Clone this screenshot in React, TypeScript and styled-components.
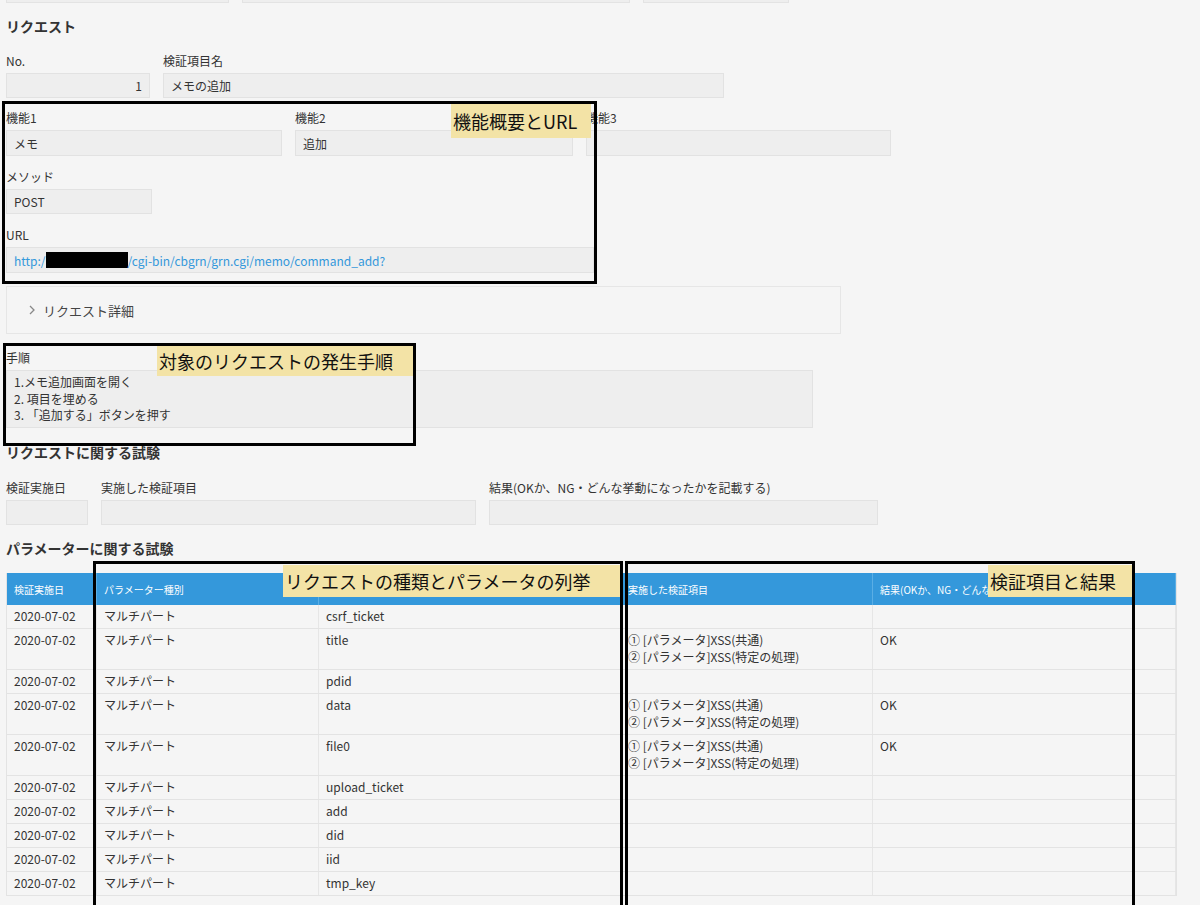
import React from "react";
import styled, { createGlobalStyle } from "styled-components";

const G = createGlobalStyle`
  body { margin:0; background:#f5f5f5; font-family:"Noto Sans CJK JP","Noto Sans",sans-serif; color:#333; font-size:12px; }
`;
const Page = styled.div`position:relative; width:1200px; height:905px; overflow:hidden; padding:0 6px; box-sizing:border-box;`;
const TopRow = styled.div`display:flex; gap:13px; height:3px; margin-bottom:13px;`;
const TopBox = styled.div<{ w: number }>`width:${p => p.w}px; border:1px solid #e3e3e3; border-top:none; background:#eee;`;
const H = styled.div<{ mt?: number }>`font-weight:bold; font-size:14px; color:#333; margin-top:${p => p.mt ?? 0}px; height:20px; line-height:20px;`;
const Row = styled.div<{ mt?: number }>`display:flex; gap:13px; margin-top:${p => p.mt ?? 0}px;`;
const Field = styled.div`display:flex; flex-direction:column;`;
const Label = styled.div`font-size:12px; height:16px; line-height:16px; margin-bottom:4px; color:#333;`;
const Input = styled.div<{ w: number; right?: boolean; link?: boolean; h?: number }>`
  width:${p => p.w}px; height:${p => p.h ?? 25}px; box-sizing:border-box; background:#eee; border:1px solid #e2e2e2;
  padding:0 7px; display:flex; align-items:center; justify-content:${p => (p.right ? "flex-end" : "flex-start")};
  color:${p => (p.link ? "#3498db" : "#333")}; font-size:12px; white-space:nowrap; overflow:hidden;
`;
const Redact = styled.span`display:inline-block; width:82px; height:16px; background:#000;`;
const Collapse = styled.div`width:835px; height:48px; box-sizing:border-box; border:1px solid #e6e6e6; margin-top:13px; display:flex; align-items:center; padding-left:20px; gap:6px; font-size:13px; color:#444;`;
const Area = styled.div`width:807px; height:58px; box-sizing:border-box; background:#eee; border:1px solid #e2e2e2; padding:3px 7px; line-height:16.5px; font-size:12px;`;
const Table = styled.div`width:1169px; margin-top:15px; border-left:1px solid #e3e3e3; border-right:1px solid #e3e3e3;`;
const cols = "90px 222px 302px 252px 303px";
const THead = styled.div`display:grid; grid-template-columns:${cols}; background:#3498db; color:#fff; height:32px; font-size:10px;`;
const Th = styled.div`display:flex; align-items:center; padding-left:7px; border-right:1px solid #5aaee5; white-space:nowrap; overflow:hidden;`;
const Tr = styled.div<{ h: number }>`display:grid; box-sizing:border-box; grid-template-columns:${cols}; height:${p => p.h}px; border-bottom:1px solid #e3e3e3; font-size:12px;`;
const Td = styled.div`padding:3px 7px 0; line-height:16.5px; border-right:1px solid #e6e6e6; white-space:nowrap;`;
const Note = styled.div<{ x: number; y: number; w: number; h: number }>`
  position:absolute; left:${p => p.x}px; top:${p => p.y}px; width:${p => p.w}px; height:${p => p.h}px; border:3px solid #000; box-sizing:border-box;`;
const Tag = styled.div<{ x: number; y: number; w: number; h: number }>`
  position:absolute; left:${p => p.x}px; top:${p => p.y}px; width:${p => p.w}px; height:${p => p.h}px; background:#f3e3a6;
  font-size:18px; line-height:${p => p.h}px; color:#111; white-space:nowrap; padding-left:2px; box-sizing:border-box;`;

const rows: [string, string, string, number][] = [
  ["csrf_ticket", "", "", 24],
  ["title", "x", "OK", 41],
  ["pdid", "", "", 24],
  ["data", "x", "OK", 41],
  ["file0", "x", "OK", 41],
  ["upload_ticket", "", "", 24],
  ["add", "", "", 24],
  ["did", "", "", 24],
  ["iid", "", "", 24],
  ["tmp_key", "", "", 24],
];

export default function App() {
  return (
    <Page>
      <G />
      <TopRow><TopBox w={221} /><TopBox w={386} /><TopBox w={144} /></TopRow>
      <H>リクエスト</H>
      <Row mt={17}>
        <Field><Label>No.</Label><Input w={144} right>1</Input></Field>
        <Field><Label>検証項目名</Label><Input w={561}>メモの追加</Input></Field>
      </Row>
      <Row mt={12}>
        <Field><Label>機能1</Label><Input w={276} h={26}>メモ</Input></Field>
        <Field><Label>機能2</Label><Input w={278} h={26}>追加</Input></Field>
        <Field><Label>機能3</Label><Input w={305} h={26} /></Field>
      </Row>
      <Row mt={13}>
        <Field><Label>メソッド</Label><Input w={146}>POST</Input></Field>
      </Row>
      <Row mt={13}>
        <Field><Label>URL</Label><Input w={588} h={26} link>http:/<Redact />/cgi-bin/cbgrn/grn.cgi/memo/command_add?</Input></Field>
      </Row>
      <Collapse>
        <svg width="10" height="12" viewBox="0 0 10 12"><path d="M3 2l4 4-4 4" fill="none" stroke="#888" strokeWidth="1.3" /></svg>
        リクエスト詳細
      </Collapse>
      <Row mt={16}>
        <Field><Label>手順</Label>
          <Area>1.メモ追加画面を開く<br />2. 項目を埋める<br />3. 「追加する」ボタンを押す</Area>
        </Field>
      </Row>
      <H mt={14}>リクエストに関する試験</H>
      <Row mt={18}>
        <Field><Label>検証実施日</Label><Input w={82} /></Field>
        <Field><Label>実施した検証項目</Label><Input w={375} /></Field>
        <Field><Label>結果(OKか、NG・どんな挙動になったかを記載する)</Label><Input w={389} /></Field>
      </Row>
      <H mt={13}>パラメーターに関する試験</H>
      <Table>
        <THead>
          <Th>検証実施日</Th><Th>パラメーター種別</Th><Th></Th><Th>実施した検証項目</Th><Th>結果(OKか、NG・どんな挙動になったかを記載する)</Th>
        </THead>
        {rows.map(([p, v, r, h], i) => (
          <Tr key={i} h={h}>
            <Td>2020-07-02</Td><Td>マルチパート</Td><Td>{p}</Td>
            <Td>{v && <>① [パラメータ]XSS(共通)<br />② [パラメータ]XSS(特定の処理)</>}</Td>
            <Td>{r}</Td>
          </Tr>
        ))}
      </Table>
      <Note x={2} y={101} w={595} h={183} />
      <Tag x={451} y={104} w={140} h={34}>機能概要とURL</Tag>
      <Note x={3} y={343} w={413} h={103} />
      <Tag x={157} y={346} w={256} h={30}>対象のリクエストの発生手順</Tag>
      <Note x={93} y={561} w={530} h={350} />
      <Tag x={283} y={565} w={337} h={32}>リクエストの種類とパラメータの列挙</Tag>
      <Note x={625} y={561} w={510} h={350} />
      <Tag x={988} y={565} w={144} h={32}>検証項目と結果</Tag>
    </Page>
  );
}
